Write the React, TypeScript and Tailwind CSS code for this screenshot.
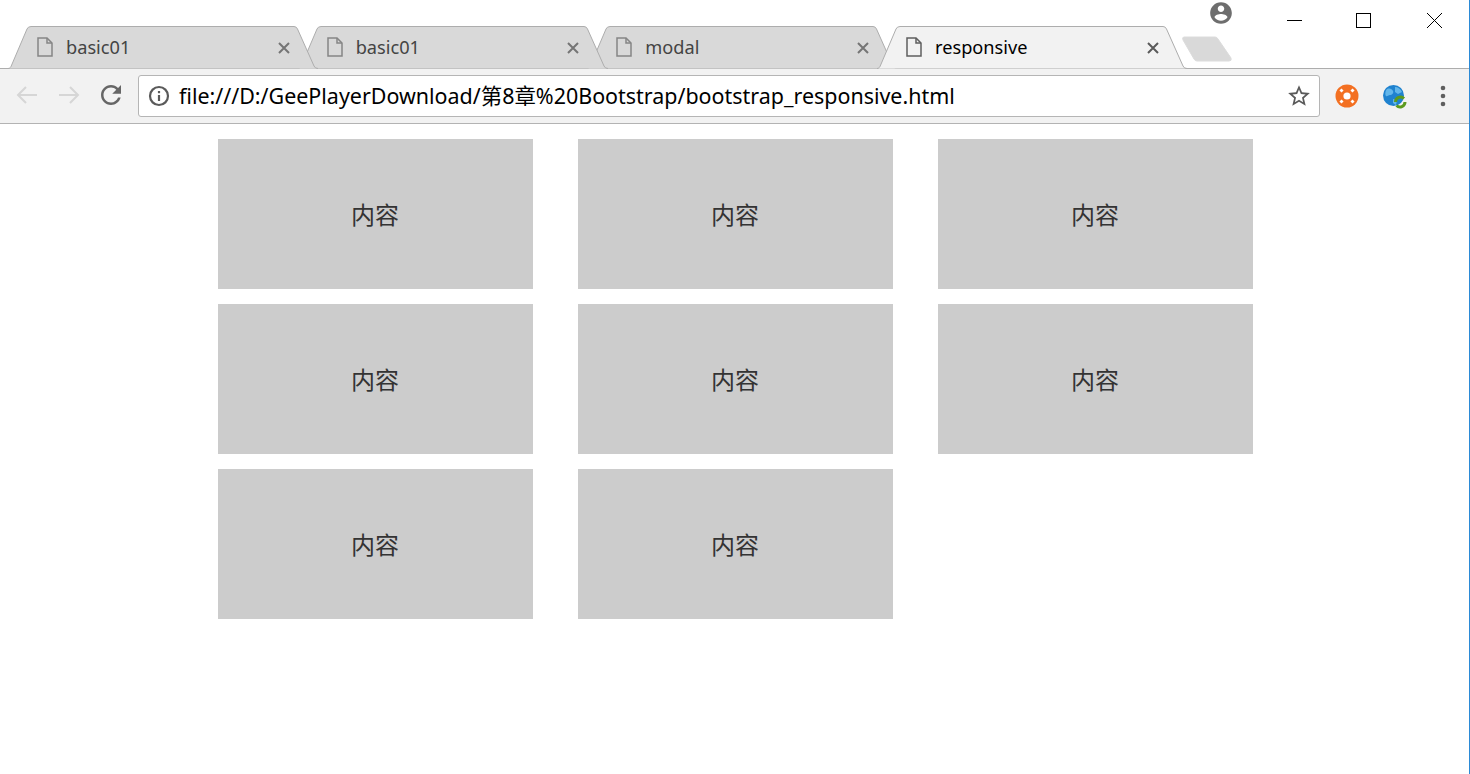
const tabs = [
  { title: 'basic01', z: 'z-30', active: false },
  { title: 'basic01', z: 'z-20', active: false },
  { title: 'modal', z: 'z-10', active: false },
  { title: 'responsive', z: 'z-40', active: true },
]

const cards = Array.from({ length: 8 }, (_, i) => i)

function FileIcon({ active }: { active: boolean }) {
  return (
    <svg width="16" height="20" viewBox="0 0 16 20" fill="none" stroke={active ? '#5f5f5f' : '#858585'} strokeWidth="1.5">
      <path d="M1 1h9l5 5v13H1z" />
      <path d="M10 1v5h5" />
    </svg>
  )
}

function Tab({ title, z, active }: { title: string; z: string; active: boolean }) {
  return (
    <div className={`relative w-[310px] h-[43px] -mr-[20.33px] shrink-0 ${z}`}>
      <svg className="absolute inset-0" width="310" height="43" viewBox="0 0 310 43">
        <path
          d="M0 42.5C1.5 42.5 2.5 41.5 3 40.5L19 3Q20 .5 23 .5H286Q288.5 .5 289.5 3L306 40Q307 42.5 310 42.5"
          fill={active ? '#f2f2f2' : '#d9d9d9'}
          stroke="#adadad"
        />
      </svg>
      <div className="relative flex items-center h-full pl-[29px] pb-[1px]">
        <FileIcon active={active} />
        <span className={`ml-[13px] text-[18.2px] leading-none ${active ? 'text-black' : 'text-[#444444]'}`}>{title}</span>
      </div>
      <svg className="absolute left-[269.5px] top-[16px]" width="12" height="12" viewBox="0 0 12 12" stroke={active ? '#5a5a5a' : '#757575'} strokeWidth="2">
        <path d="M1 1l10 10M11 1L1 11" />
      </svg>
    </div>
  )
}

export default function App() {
  return (
    <div className="h-[774px] overflow-hidden bg-white border-r border-[#2b8ad6] font-['Noto_Sans','Noto_Sans_CJK_SC',sans-serif]">
      {/* tab strip */}
      <div className="relative h-[69px] border-b border-[#adadad]">
        <div className="flex pt-[26px] pl-[8px]">
          {tabs.map((t, i) => (
            <Tab key={i} {...t} />
          ))}
          <svg className="ml-[15px] mt-[10px] shrink-0" width="51" height="26" viewBox="0 0 51 26">
            <path d="M2 1H33Q35 1 36 3L49 22Q50 25 47 25H15Q13 25 12 23L1 4Q0 1 2 1z" fill="#d9d9d9" stroke="#dcdcdc" />
          </svg>
        </div>

        <svg className="absolute left-[1208px] top-0" width="26" height="26" viewBox="0 0 24 24" fill="#6e6e6e">
          <path d="M12 2C6.48 2 2 6.48 2 12s4.48 10 10 10 10-4.48 10-10S17.52 2 12 2zm0 3c1.66 0 3 1.34 3 3s-1.34 3-3 3-3-1.34-3-3 1.34-3 3-3zm0 14.2c-2.5 0-4.71-1.28-6-3.22.03-1.99 4-3.08 6-3.08 1.99 0 5.97 1.09 6 3.08-1.29 1.94-3.5 3.22-6 3.22z" />
        </svg>

        {/* window controls */}
        <div className="absolute left-[1287px] top-[13px] flex">
          <svg width="15" height="15" viewBox="0 0 15 15" stroke="#000" fill="none">
            <path d="M0 7.5h15" />
          </svg>
          <svg className="ml-[54px]" width="15" height="15" viewBox="0 0 15 15" stroke="#000" fill="none">
            <rect x=".5" y=".5" width="14" height="14" />
          </svg>
          <svg className="ml-[56px]" width="15" height="15" viewBox="0 0 15 15" stroke="#000" fill="none">
            <path d="M0 0l15 15M15 0L0 15" />
          </svg>
        </div>
      </div>

      {/* toolbar */}
      <div className="flex h-[55px] pt-[6px] bg-[#f2f2f2] border-b border-[#b3b3b3]">
        <div className="flex items-start w-[138px] pl-[12px] pt-[5px] shrink-0">
          <svg width="30" height="30" viewBox="0 0 30 30" fill="none" stroke="#d6d6d6" strokeWidth="2">
            <path d="M25 15H6M14 7l-8 8 8 8" />
          </svg>
          <svg className="ml-[12px]" width="30" height="30" viewBox="0 0 30 30" fill="none" stroke="#d6d6d6" strokeWidth="2">
            <path d="M5 15h19M16 7l8 8-8 8" />
          </svg>
          <svg className="ml-[12px]" width="30" height="30" viewBox="0 0 24 24" fill="#666666">
            <path d="M17.65 6.35C16.2 4.9 14.21 4 12 4c-4.42 0-7.99 3.58-7.99 8s3.57 8 7.99 8c3.73 0 6.84-2.55 7.73-6h-2.08c-.82 2.33-3.04 4-5.65 4-3.31 0-6-2.69-6-6s2.69-6 6-6c1.66 0 3.14.69 4.22 1.78L13 11h7V4l-2.35 2.35z" />
          </svg>
        </div>

        <div className="flex items-center w-[1182px] h-[42px] shrink-0 bg-white border border-[#b5b5b5] rounded-[3px] pl-[9px] pr-[7px]">
          <svg className="shrink-0" width="22" height="22" viewBox="0 0 22 22" fill="none" stroke="#5a5a5a" strokeWidth="2.2">
            <circle cx="11" cy="11" r="9" />
            <path d="M11 10v6" />
            <path d="M11 6v2.2" />
          </svg>
          <span className="ml-[9px] text-[21.45px] leading-none text-black whitespace-nowrap">
            file:///D:/GeePlayerDownload/第8章%20Bootstrap/bootstrap_responsive.html
          </span>
          <svg className="ml-auto shrink-0" width="26" height="26" viewBox="0 0 24 24" fill="#5a5a5a">
            <path d="M22 9.24l-7.19-.62L12 2 9.19 8.63 2 9.24l5.46 4.73L5.82 21 12 17.27 18.18 21l-1.63-7.03L22 9.24zM12 15.4l-3.76 2.27 1-4.28-3.32-2.88 4.38-.38L12 6.1l1.71 4.04 4.38.38-3.32 2.88 1 4.28L12 15.4z" />
          </svg>
        </div>

        <div className="flex items-start pt-[9px] pl-[15px]">
          <svg width="24" height="24" viewBox="0 0 24 24">
            <circle cx="12" cy="12" r="11.5" fill="#f37022" />
            <circle cx="12" cy="12" r="3.6" fill="#ffffff" />
            <path d="M5.5 7.5l2-2M16.5 5.5l2 2M5.5 16.5l2 2M16.5 18.5l2-2" stroke="#ffffff" strokeWidth="3" />
          </svg>
          <svg className="ml-[23px]" width="26" height="26" viewBox="0 0 26 26">
            <circle cx="11.5" cy="11.5" r="10.5" fill="#1f82cf" />
            <path d="M5 5c3-1 5 0 6 2s-1 4-3 4-3 2-4 1-1-5 1-7zM13 3c3 0 6 2 7 5l-4 2-3-2zM11 15l4 1-1 5-3-2z" fill="#62b6ea" />
            <path d="M13.5 18a5 5 0 0 1 8.5-3.5M23 18a5 5 0 0 1-8.5 3.5" fill="none" stroke="#5c9a1e" strokeWidth="3" />
          </svg>
          <svg className="ml-[32px] mt-[1px]" width="6" height="22" viewBox="0 0 6 22" fill="#5f5f5f">
            <circle cx="3" cy="3" r="2.3" />
            <circle cx="3" cy="11" r="2.3" />
            <circle cx="3" cy="19" r="2.3" />
          </svg>
        </div>
      </div>

      {/* page */}
      <div className="grid grid-cols-[315px_315px_315px] gap-x-[45px] gap-y-[15px] pt-[15px] pl-[218px]">
        {cards.map((i) => (
          <div key={i} className="flex items-center justify-center h-[150px] pt-[2px] pr-[1px] bg-[#cccccc] text-[24px] text-[#333333]">
            内容
          </div>
        ))}
      </div>
    </div>
  )
}
